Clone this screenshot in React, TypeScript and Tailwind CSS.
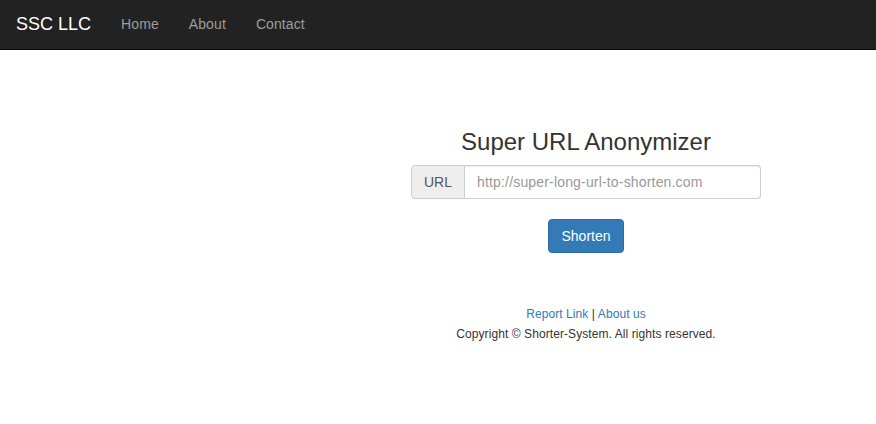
import { useState } from "react";

const navLinks = ["Home", "About", "Contact"];

export default function App() {
  const [url, setUrl] = useState("");

  return (
    <div className="min-h-screen bg-white text-[#333] font-['Liberation_Sans',Arial,sans-serif] text-[14px] leading-[20px]">
      {/* navbar */}
      <nav className="flex h-[50px] items-stretch border-b border-[#080808] bg-[#222] px-[15px] pb-[2px]">
        <a href="#" className="flex items-center px-[1px] pr-[15px] text-[18px] text-white">
          SSC LLC
        </a>
        <ul className="flex">
          {navLinks.map((l) => (
            <li key={l} className="flex">
              <a href="#" className="flex items-center px-[15px] text-[#9d9d9d] tracking-[0.1px] hover:text-white">
                {l}
              </a>
            </li>
          ))}
        </ul>
      </nav>

      {/* main */}
      <div className="ml-[411px] w-[350px] pt-[79px]">
        <h3 className="mb-[10px] text-center text-[24px] leading-[26.4px]">
          Super URL Anonymizer
        </h3>
        <div className="flex h-[34px]">
          <span className="flex items-center rounded-l-[4px] border border-[#ccc] bg-[#eee] px-[12px] text-[#555]">
            URL
          </span>
          <input
            value={url}
            onChange={(e) => setUrl(e.target.value)}
            placeholder="http://super-long-url-to-shorten.com"
            className="min-w-0 flex-1 rounded-r-[4px] border border-l-0 border-[#ccc] px-[12px] tracking-[0.17px] text-[#555] placeholder:text-[#999] shadow-[inset_0_1px_1px_rgba(0,0,0,0.075)] outline-none"
          />
        </div>
        <div className="mt-[20px] flex justify-center">
          <button
            type="button"
            className="h-[34px] rounded-[4px] border border-[#2e6da4] bg-[#337ab7] px-[12px] text-white"
          >
            Shorten
          </button>
        </div>

        <footer className="mt-[51px] text-center text-[12px] leading-[20px] tracking-[0.08px]">
          <p>
            <a href="#" className="text-[#337ab7]">Report Link</a> |{" "}
            <a href="#" className="text-[#337ab7]">About us</a>
          </p>
          <p>Copyright © Shorter-System. All rights reserved.</p>
        </footer>
      </div>
    </div>
  );
}
